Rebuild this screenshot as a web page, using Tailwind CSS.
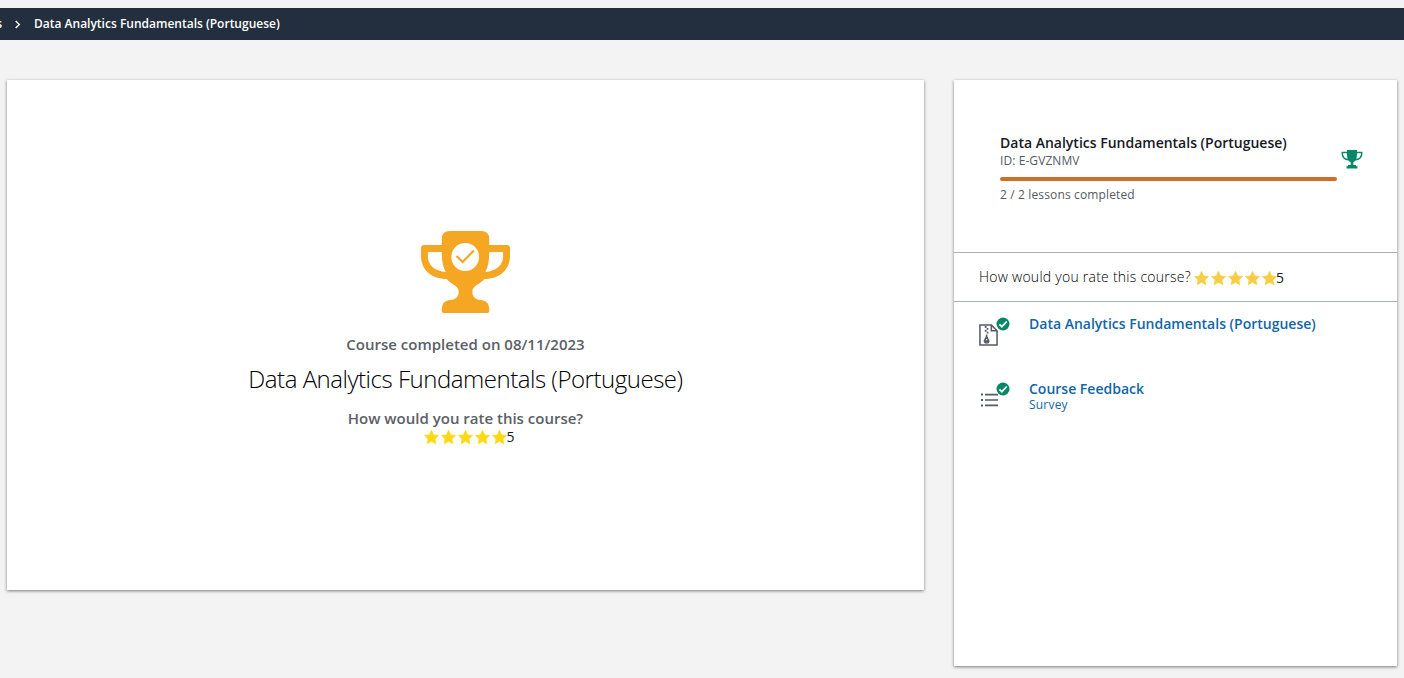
<!DOCTYPE html>
<html lang="en">
<head>
<meta charset="utf-8">
<title>Data Analytics Fundamentals (Portuguese)</title>
<script src="https://cdn.jsdelivr.net/npm/@tailwindcss/browser@4"></script>
</head>
<body class="h-[678px] overflow-hidden bg-[#f3f3f3] pt-2 font-['Open_Sans','Noto_Sans',sans-serif] text-[#16191f]">
<svg class="hidden">
  <symbol id="star" viewBox="0 0 17 16"><path d="M8.5 1.3l2.1 4.6 4.9.6-3.6 3.4.9 4.9-4.3-2.5-4.3 2.5.9-4.9-3.6-3.4 4.9-.6z" fill="currentColor" stroke="currentColor" stroke-width=".7" stroke-linejoin="round"/></symbol>
  <symbol id="done" viewBox="0 0 14 14"><circle cx="7" cy="7" r="6.5" fill="#068765"/><path d="M3.4 7.3l2.5 2.4 4.8-5.2" fill="none" stroke="#fff" stroke-width="1.7"/></symbol>
</svg>
<header class="flex h-8 items-center overflow-hidden bg-[#232f3e] text-xs font-semibold whitespace-nowrap text-white">
  <span class="flex w-[2px] justify-end">s</span>
  <svg class="ml-3 h-[9px] w-[7px]" viewBox="0 0 7 8" fill="none" stroke="currentColor" stroke-width="1.4"><path d="M1.7.4L5.3 4 1.7 7.6"/></svg>
  <span class="ml-[13px]">Data Analytics Fundamentals (Portuguese)</span>
</header>
<main class="flex items-start gap-[30px] px-[7px] pt-10 whitespace-nowrap">
  <section class="flex h-[510px] w-[917px] flex-col items-center bg-white pt-[151px] shadow-[0_1px_3px_rgba(0,0,0,0.5)]">
    <svg class="mr-px h-[83px] w-[89px]" viewBox="0 0 90 83" preserveAspectRatio="none">
      <path d="M29 0H61Q69 0 69 8V14H87Q90 14 90 17V25C90 39 79 48 64 48C60 53 52 55 52 60V63Q54 69 61 69Q69 70 69 78V80Q69 82 67 82H23Q21 82 21 80V78Q21 70 29 69Q36 69 38 63V60C38 55 30 53 26 48C11 48 0 39 0 25V17Q0 14 3 14H21V8Q21 0 29 0Z" fill="#f5a623"/>
      <path d="M7 21H21C21 29 22 36 25 41C14 40 7 34 7 26ZM83 21H69C69 29 68 36 65 41C76 40 83 34 83 26Z" fill="#fff"/>
      <circle cx="44.7" cy="26" r="14" fill="#fff"/>
      <path d="M36 25L42 31L53.5 19.5" fill="none" stroke="#f5a623" stroke-width="2.2"/>
    </svg>
    <p class="mt-[20px] h-5 text-[15px] leading-5 font-semibold text-[#5a6068]">Course completed on 08/11/2023</p>
    <h1 class="mt-[10px] h-[30px] text-2xl leading-[30px] font-light tracking-[-0.47px] text-black">Data Analytics Fundamentals (Portuguese)</h1>
    <p class="mt-[14px] h-5 text-[15px] leading-5 font-semibold text-[#5a6068]">How would you rate this course?</p>
    <div class="ml-[7px] flex h-[18px] items-center text-sm text-[#16191f]">
      <div class="flex text-[#ffd814]"><svg class="h-4 w-[17px]"><use href="#star"/></svg><svg class="h-4 w-[17px]"><use href="#star"/></svg><svg class="h-4 w-[17px]"><use href="#star"/></svg><svg class="h-4 w-[17px]"><use href="#star"/></svg><svg class="h-4 w-[17px]"><use href="#star"/></svg></div>
      <span class="-ml-[2px]">5</span>
    </div>
  </section>
  <aside class="h-[586px] w-[443px] bg-white shadow-[0_1px_3px_rgba(0,0,0,0.5)]">
    <div class="flex h-[173px] border-b border-[#aab0b1] pt-[53px] pl-[46px]">
      <div class="w-[337px]">
        <h2 class="h-5 text-sm leading-5 font-semibold text-[#16191f]">Data Analytics Fundamentals (Portuguese)</h2>
        <p class="h-4 text-xs leading-4 tracking-[0.08px] text-[#545b64]">ID: E-GVZNMV</p>
        <div class="mt-2 h-1 rounded-full bg-[#cc6f28]"></div>
        <p class="mt-[6px] h-4 text-xs leading-4 tracking-[0.14px] text-[#545b64]">2 / 2 lessons completed</p>
      </div>
      <svg class="mt-4 ml-1 h-5 w-[22px]" viewBox="0 0 22 20">
        <path d="M6 1H16V4C16 10 15 12 12.3 13.2V16H15V17.2H16.5V19.5H5.5V17.2H7V16H9.7V13.2C7 12 6 10 6 4Z" fill="#068765"/>
        <path d="M6 3.5H1.2C1 8 3.5 10.7 7.5 10.8M16 3.5H20.8C21 8 18.5 10.7 14.5 10.8" fill="none" stroke="#068765" stroke-width="1.4"/>
      </svg>
    </div>
    <div class="flex h-[49px] items-center border-b border-[#aab0b1] pl-[25px] text-sm font-light">
      <span class="tracking-[0.25px] text-black">How would you rate this course?</span>
      <div class="ml-[2px] flex pt-[2px] text-[#f8cd46]"><svg class="h-4 w-[17px]"><use href="#star"/></svg><svg class="h-4 w-[17px]"><use href="#star"/></svg><svg class="h-4 w-[17px]"><use href="#star"/></svg><svg class="h-4 w-[17px]"><use href="#star"/></svg><svg class="h-4 w-[17px]"><use href="#star"/></svg></div>
      <span class="-ml-[2px] pt-[2px] font-normal">5</span>
    </div>
    <div class="flex h-[65px] pt-3 pl-[25px] text-[#1166a8]">
      <div class="relative h-8 w-[50px]">
        <svg class="mt-[10px] h-[22px] w-[19px]" viewBox="0 0 20 23" fill="none" stroke="#545b64" stroke-width="1.6">
          <path d="M1 1H13L19 7V22H1ZM13 1V7H19"/>
          <path d="M7 2V4M9 4V6M7 6V8M9 8V10" stroke-width="1.8"/>
          <path d="M8 11V14M8 13L5.6 18Q6 20 8 20T10.4 18Z"/><path d="M6 17H10V19H6Z" fill="#545b64" stroke="none"/>
        </svg>
        <svg class="absolute top-[3px] left-[17px] h-[14px] w-[14px]"><use href="#done"/></svg>
      </div>
      <a class="h-5 text-sm leading-5 font-semibold">Data Analytics Fundamentals (Portuguese)</a>
    </div>
    <div class="flex h-[65px] pt-3 pl-[25px] text-[#1166a8]">
      <div class="relative h-8 w-[50px]">
        <svg class="mt-[14px] h-[14px] w-5" viewBox="0 0 20 14" fill="#545b64"><path d="M2 .6h2v2H2zM6 .8h13v1.6H6zM2 6h2v2H2zM6 6.2h13v1.6H6zM2 11.4h2v2H2zM6 11.6h13v1.6H6z"/></svg>
        <svg class="absolute top-[3px] left-[17px] h-[14px] w-[14px]"><use href="#done"/></svg>
      </div>
      <div>
        <a class="block h-5 text-sm leading-5 font-semibold">Course Feedback</a>
        <p class="-mt-[2px] h-4 text-xs leading-4 tracking-[0.2px]">Survey</p>
      </div>
    </div>
  </aside>
</main>
</body>
</html>
